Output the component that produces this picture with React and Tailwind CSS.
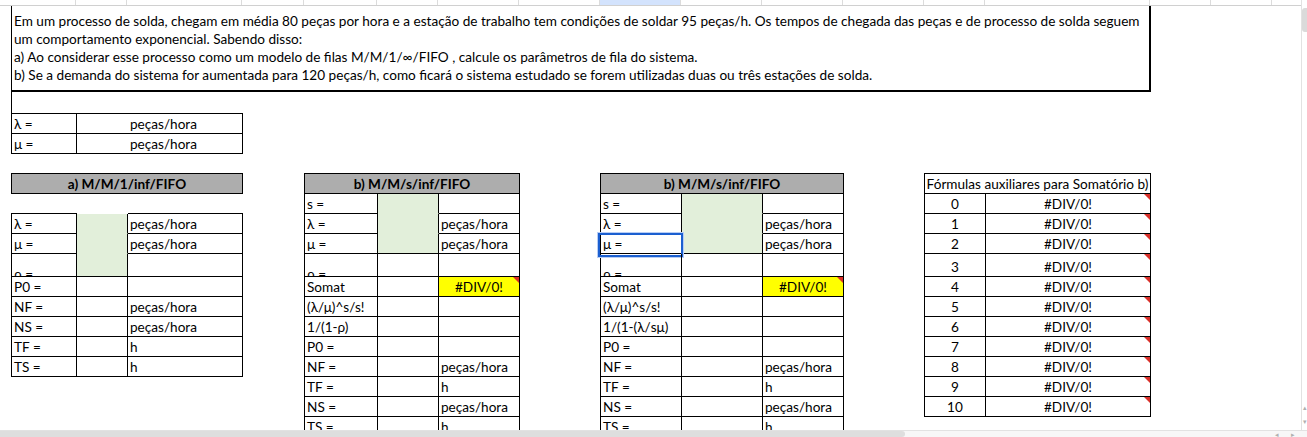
import React from 'react';
import clsx from 'clsx';

const headerCols = [
  'w-[76px]', 'w-[51px]', 'w-[115px]', 'w-[62px]', 'w-[73px]', 'w-[61px]', 'w-[81px]', 'w-[81px]',
  'w-[81px]', 'w-[81px]', 'w-[81px]', 'w-[81px]', 'w-[61px]', 'w-[165px]', 'w-[61px]', 'w-[61px]',
];

const problem = [
  'Em um processo de solda, chegam em média 80 peças por hora e a estação de trabalho tem condições de soldar 95 peças/h. Os tempos de chegada das peças e de processo de solda seguem',
  'um comportamento exponencial. Sabendo disso:',
  'a) Ao considerar esse processo como um modelo de filas M/M/1/∞/FIFO , calcule os parâmetros de fila do sistema.',
  'b) Se a demanda do sistema for aumentada para 120 peças/h, como ficará o sistema estudado se forem utilizadas duas ou três estações de solda.',
];

// célula de planilha: borda direita e inferior, texto alinhado embaixo
function Cell({ w, children, center, green, yellow, flag, noBottom, noRight, clip, tall }) {
  return (
    <div
      className={clsx(
        'relative flex shrink-0 items-end overflow-hidden whitespace-nowrap border-black px-[2px] leading-[18px]',
        w,
        noRight ? 'border-r-0' : 'border-r',
        noBottom ? 'border-b border-b-transparent' : 'border-b',
        center && 'justify-center',
        green && 'bg-[#e2efda]',
        yellow && 'bg-[#ffff00]',
        tall ? 'h-[23px]' : 'h-[20px]'
      )}
    >
      <span className={clip ? '-mb-[7px]' : ''}>{children}</span>
      {flag && (
        <span className="absolute right-0 top-0 h-0 w-0 border-l-[6px] border-t-[6px] border-l-transparent border-t-[#d9302a]" />
      )}
    </div>
  );
}

function TitleBox({ w, gray, children }) {
  return (
    <div
      className={clsx(
        'flex h-[21px] items-end justify-center overflow-hidden whitespace-nowrap border border-black leading-[18px]',
        w,
        gray && 'bg-[#adadad] font-bold'
      )}
    >
      {children}
    </div>
  );
}

function TableA() {
  const rows = [
    ['λ =', true, 'peças/hora'],
    ['μ =', true, 'peças/hora'],
    ['ρ =', true, ''],
    ['P0 =', false, ''],
    ['NF =', false, 'peças/hora'],
    ['NS =', false, 'peças/hora'],
    ['TF =', false, 'h'],
    ['TS =', false, 'h'],
  ];
  return (
    <div className="flex w-[232px] shrink-0 flex-col">
      <TitleBox w="w-[232px]" gray>a) M/M/1/inf/FIFO</TitleBox>
      <div className="h-[19px]" />
      <div className="flex flex-col border-l border-black">
        {rows.map(([label, green, unit], i) => (
          <div key={i} className="flex">
            <div className={clsx('flex flex-col', i === 0 && 'border-t border-black')}>
              <Cell w="w-[65px]" tall={i === 2} clip={i === 2}>{label}</Cell>
            </div>
            <div className={clsx('flex flex-col', i === 0 && 'border-t border-transparent')}>
              <Cell w="w-[51px]" green={green} noBottom={i < 2} tall={i === 2} />
            </div>
            <div className={clsx('flex flex-col', i === 0 && 'border-t border-black')}>
              <Cell w="w-[115px]" tall={i === 2}>{unit}</Cell>
            </div>
          </div>
        ))}
      </div>
    </div>
  );
}

function TableB({ widths, invLabel, selected }) {
  const rows = [
    ['s =', ''],
    ['λ =', 'peças/hora'],
    ['μ =', 'peças/hora'],
    ['ρ =', ''],
    ['Somat', '#DIV/0!'],
    ['(λ/μ)^s/s!', ''],
    [invLabel, ''],
    ['P0 =', ''],
    ['NF =', 'peças/hora'],
    ['TF =', 'h'],
    ['NS =', 'peças/hora'],
    ['TS =', 'h'],
  ];
  const [w1, w2, w3, total] = widths;
  return (
    <div className={clsx('flex shrink-0 flex-col', total)}>
      <TitleBox w={total} gray>b) M/M/s/inf/FIFO</TitleBox>
      <div className="flex flex-col border-l border-black">
        {rows.map(([label, unit], i) => (
          <div key={i} className="relative flex">
            <Cell w={w1} tall={i === 3} clip={i === 3}>{label}</Cell>
            <Cell w={w2} green={i < 3} noBottom={i < 2} tall={i === 3} />
            <Cell w={w3} tall={i === 3} yellow={i === 4} center={i === 4} flag={i === 4}>{unit}</Cell>
            {selected && i === 2 && (
              <span className="pointer-events-none absolute -left-[3px] -top-[1px] h-[24px] w-[85px] border-2 border-[#1b5fd0] shadow-[0_0_0_1px_#b7cdf5]" />
            )}
          </div>
        ))}
      </div>
    </div>
  );
}

function TableAux() {
  const nums = [0, 1, 2, 3, 4, 5, 6, 7, 8, 9, 10];
  return (
    <div className="flex w-[227px] shrink-0 flex-col">
      <TitleBox w="w-[227px]">Fórmulas auxiliares para Somatório b)</TitleBox>
      <div className="flex flex-col border-l border-black">
        {nums.map((n) => (
          <div key={n} className="flex">
            <Cell w="w-[61px]" center tall={n === 3}>{n}</Cell>
            <Cell w="w-[165px]" center flag tall={n === 3}>#DIV/0!</Cell>
          </div>
        ))}
      </div>
    </div>
  );
}

export default function App() {
  return (
    <div className="flex h-[437px] w-[1307px] flex-col overflow-hidden bg-white font-['Lato',sans-serif] text-[13.6px] text-black">
      <div className="flex min-h-0 flex-1">
        <div className="flex w-[1301px] shrink-0 flex-col overflow-hidden">
          {/* cabeçalho das colunas */}
          <div className="flex h-[6px] shrink-0 border-b border-[#d0d0d0]">
            {headerCols.map((w, i) => (
              <div key={i} className={clsx('h-full shrink-0 border-r border-[#dcdcdc]', w, i === 8 && 'bg-[#d3e3fd]')} />
            ))}
            <div className="flex-1" />
          </div>

          {/* enunciado */}
          <div className="ml-[11px] h-[86px] w-[1140px] shrink-0 border-b-2 border-l border-r-2 border-black pl-[2px] pt-[6px] leading-[18px]">
            {problem.map((t, i) => (
              <div key={i} className="whitespace-nowrap">{t}</div>
            ))}
          </div>
          <div className="ml-[11px] h-[21px] shrink-0 border-l border-black" />

          {/* dados de entrada */}
          <div className="ml-[11px] flex w-[232px] shrink-0 flex-col border-l border-t border-black">
            <div className="flex">
              <Cell w="w-[65px]">λ =</Cell>
              <Cell w="w-[51px]" noRight />
              <Cell w="w-[115px]">peças/hora</Cell>
            </div>
            <div className="flex">
              <Cell w="w-[65px]">μ =</Cell>
              <Cell w="w-[51px]" noRight />
              <Cell w="w-[115px]">peças/hora</Cell>
            </div>
          </div>
          <div className="h-[19px] shrink-0" />

          {/* tabelas */}
          <div className="flex pl-[11px]">
            <TableA />
            <div className="w-[61px] shrink-0" />
            <TableB widths={['w-[73px]', 'w-[61px]', 'w-[81px]', 'w-[216px]']} invLabel="1/(1-ρ)" />
            <div className="w-[80px] shrink-0" />
            <TableB widths={['w-[81px]', 'w-[81px]', 'w-[81px]', 'w-[244px]']} invLabel="1/(1-(λ/sμ)" selected />
            <div className="w-[80px] shrink-0" />
            <TableAux />
          </div>
        </div>

        {/* barra vertical */}
        <div className="flex w-[6px] shrink-0 flex-col border-l border-[#e2e2e2] bg-white">
          <div className="mt-[8px] h-[24px] rounded-l-[3px] bg-[#dadada]" />
          <div className="flex-1" />
          <div className="mb-[2px] text-center text-[7px] leading-[12px] text-[#b0b0b0]">▴</div>
          <div className="mb-[3px] text-center text-[7px] leading-[12px] text-[#b0b0b0]">▾</div>
        </div>
      </div>

      {/* barra horizontal */}
      <div className="flex h-[7px] shrink-0 items-stretch border-t border-[#e2e2e2] bg-[#f7f7f7]">
        <div className="w-[905px] rounded-r-[4px] bg-[#dedede]" />
        <div className="flex-1" />
        <div className="w-[16px] text-center text-[7px] leading-[7px] text-[#b0b0b0]">◂</div>
        <div className="w-[16px] text-center text-[7px] leading-[7px] text-[#b0b0b0]">▸</div>
        <div className="w-[6px]" />
      </div>
    </div>
  );
}
